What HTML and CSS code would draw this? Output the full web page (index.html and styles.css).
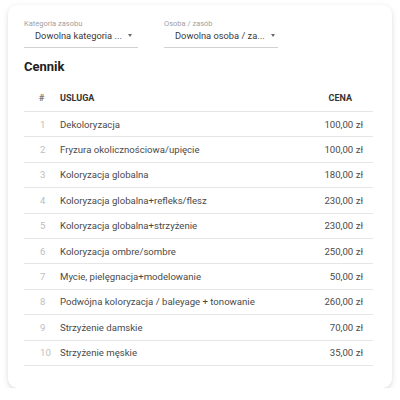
FILE: index.html
```html
<!DOCTYPE html>
<html lang="pl">
<head>
<meta charset="utf-8">
<link rel="stylesheet" href="styles.css">
</head>
<body>
<div class="card">
  <div class="filters">
    <div class="select">
      <div class="select-label">Kategoria zasobu</div>
      <div class="select-field">
        <span class="select-value">Dowolna kategoria ...</span>
        <span class="arrow"></span>
      </div>
    </div>
    <div class="select">
      <div class="select-label">Osoba / zasób</div>
      <div class="select-field">
        <span class="select-value">Dowolna osoba / za...</span>
        <span class="arrow"></span>
      </div>
    </div>
  </div>
  <h2 class="title">Cennik</h2>
  <div class="table">
    <div class="row head"><span class="num">#</span><span class="name">USLUGA</span><span class="price">CENA</span></div>
    <div class="row"><span class="num">1</span><span class="name">Dekoloryzacja</span><span class="price">100,00 zł</span></div>
    <div class="row"><span class="num">2</span><span class="name">Fryzura okolicznościowa/upięcie</span><span class="price">100,00 zł</span></div>
    <div class="row"><span class="num">3</span><span class="name">Koloryzacja globalna</span><span class="price">180,00 zł</span></div>
    <div class="row"><span class="num">4</span><span class="name">Koloryzacja globalna+refleks/flesz</span><span class="price">230,00 zł</span></div>
    <div class="row"><span class="num">5</span><span class="name">Koloryzacja globalna+strzyżenie</span><span class="price">230,00 zł</span></div>
    <div class="row"><span class="num">6</span><span class="name">Koloryzacja ombre/sombre</span><span class="price">250,00 zł</span></div>
    <div class="row"><span class="num">7</span><span class="name">Mycie, pielęgnacja+modelowanie</span><span class="price">50,00 zł</span></div>
    <div class="row"><span class="num">8</span><span class="name">Podwójna koloryzacja / baleyage + tonowanie</span><span class="price">260,00 zł</span></div>
    <div class="row"><span class="num">9</span><span class="name">Strzyżenie damskie</span><span class="price">70,00 zł</span></div>
    <div class="row"><span class="num">10</span><span class="name">Strzyżenie męskie</span><span class="price">35,00 zł</span></div>
  </div>
</div>
</body>
</html>
```
FILE: styles.css
```css
html, body {
  margin: 0;
  padding: 0;
  background: #ffffff;
}
body {
  padding: 5px 8px 0 8px;
  font-family: Roboto, "Noto Sans", Arial, sans-serif;
  color: #444;
}
.card {
  background: #fff;
  border-radius: 9px;
  box-shadow: 0 2px 6px rgba(0,0,0,0.12), 0 1px 2px rgba(0,0,0,0.06);
  padding: 14px 19px 22px 16px;
  height: 383px;
  box-sizing: border-box;
}
.filters {
  display: flex;
  gap: 26px;
}
.select {
  width: 114px;
}
.select-label {
  font-size: 7.5px;
  line-height: 10px;
  color: #a0a0a0;
  white-space: nowrap;
}
.select-field {
  display: flex;
  align-items: center;
  padding: 0 0 5px 11px;
  border-bottom: 1px solid #d2d2d2;
  height: 13px;
}
.select-value {
  font-size: 9.3px;
  line-height: 13px;
  color: #3a3a3a;
  white-space: nowrap;
}
.arrow {
  width: 0;
  height: 0;
  border-left: 2.5px solid transparent;
  border-right: 2.5px solid transparent;
  border-top: 3px solid #6a6a6a;
  margin-left: 6px;
}
.title {
  margin: 11px 0 0 0;
  font-size: 13px;
  line-height: 16px;
  font-weight: 700;
  color: #222;
}
.table {
  margin-top: 9px;
}
.row {
  display: flex;
  align-items: center;
  height: 25.4px;
  border-bottom: 1px solid #e6e6e6;
  box-sizing: border-box;
  font-size: 9.6px;
  color: #4a4a4a;
}
.row.head {
  height: 28px;
  font-size: 9px;
  font-weight: 700;
  color: #333;
}
.num {
  width: 36px;
  padding-left: 16px;
  box-sizing: border-box;
  color: #bdbdbd;
}
.head .num {
  color: #777;
  padding-left: 15px;
}
.name {
  flex: 1;
}
.price {
  padding-right: 10px;
  text-align: right;
}
.head .price {
  padding-right: 21px;
}
```
